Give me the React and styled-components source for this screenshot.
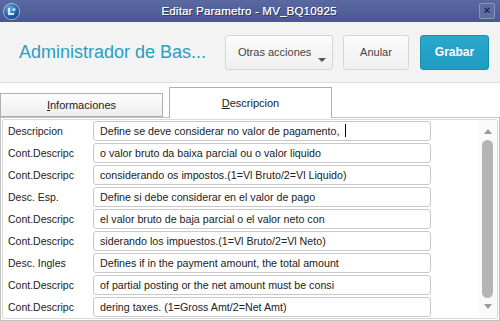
import React from "react";
import styled, { createGlobalStyle } from "styled-components";

const Global = createGlobalStyle`
  html, body { margin: 0; padding: 0; background: #fff; }
  body { font-family: "Liberation Sans", Arial, sans-serif; }
`;

const Window = styled.div`
  width: 500px;
  height: 321px;
  overflow: hidden;
  display: flex;
  flex-direction: column;
  background: #fff;
`;

const TitleBar = styled.div`
  height: 22px;
  flex: none;
  display: grid;
  grid-template-columns: 1fr auto 1fr;
  align-items: center;
  padding: 0 5px 0 3px;
  background: linear-gradient(#5a69a2, #4a588f);
`;

const TitleText = styled.div`
  color: #fff;
  font-size: 11.5px;
  letter-spacing: 0.2px;
  text-shadow: 1px 1px 0 #2a3160, 0.4px 0 0 #fff;
`;

const CloseBtn = styled.div`
  justify-self: end;
  width: 14px;
  height: 14px;
  border: 1px solid #8a94bf;
  border-radius: 2px;
  background: #5d6ca3;
  color: #1c2240;
  font-size: 11px;
  font-weight: bold;
  line-height: 13px;
  text-align: center;
`;

const Header = styled.div`
  height: 60px;
  flex: none;
  display: flex;
  align-items: center;
  padding: 0 11px 0 19px;
  background: #f3f3f3;
  border-bottom: 1px solid #dedede;
`;

const AppTitle = styled.div`
  flex: 1;
  color: #2a9ec0;
  font-size: 18px;
  margin-top: 1px;
`;

const Button = styled.div`
  position: relative;
  box-sizing: border-box;
  height: 35px;
  width: ${(p) => p.w}px;
  margin-left: ${(p) => p.ml || 0}px;
  display: flex;
  align-items: center;
  padding-left: ${(p) => (p.left ? 12 : 0)}px;
  justify-content: ${(p) => (p.left ? "flex-start" : "center")};
  border-radius: 3px;
  font-size: ${(p) => (p.primary ? "12px" : "11px")};
  font-weight: ${(p) => (p.primary ? "bold" : "normal")};
  color: ${(p) => (p.primary ? "#fff" : "#454545")};
  border: 1px solid ${(p) => (p.primary ? "#1b8fb0" : "#d6d6d6")};
  background: ${(p) =>
    p.primary
      ? "linear-gradient(#29a9cc, #1f9bbf)"
      : "linear-gradient(#fcfcfc, #efefef)"};
`;

const Caret = styled.span`
  position: absolute;
  right: 6px;
  bottom: 7px;
  width: 0;
  height: 0;
  border-left: 4px solid transparent;
  border-right: 4px solid transparent;
  border-top: 4px solid #555;
`;

const TabsRow = styled.div`
  height: 34px;
  flex: none;
  display: flex;
  align-items: flex-end;
  gap: 6px;
`;

const Tab = styled.div`
  box-sizing: border-box;
  width: 163px;
  height: ${(p) => (p.active ? 31 : 24)}px;
  margin-bottom: ${(p) => (p.active ? -1 : 0)}px;
  display: flex;
  align-items: center;
  justify-content: center;
  font-size: 11px;
  color: #222;
  border: 1px solid #b0b0b0;
  border-bottom: ${(p) => (p.active ? "none" : "1px solid #b0b0b0")};
  background: ${(p) => (p.active ? "#fff" : "linear-gradient(#fdfdfd, #eeeeee)")};
  position: relative;
  z-index: ${(p) => (p.active ? 2 : 0)};
  & u { text-decoration: underline; }
`;

const Panel = styled.div`
  flex: 1;
  display: flex;
  border: 1px solid #c2c2c2;
  padding: 1px;
  background: #fff;
`;

const Inner = styled.div`
  flex: 1;
  display: flex;
  border: 1px solid #dadada;
  border-radius: 2px;
`;

const Rows = styled.div`
  flex: 1;
  display: flex;
  flex-direction: column;
  gap: 3px;
  padding: 1px 0 0 5px;
`;

const Row = styled.div`
  display: flex;
  align-items: center;
  height: 19px;
`;

const Label = styled.div`
  width: 85px;
  font-size: 10.5px;
  color: #222;
`;

const Field = styled.div`
  box-sizing: border-box;
  width: 338px;
  height: 20px;
  border: 1px solid #c9c9c9;
  border-radius: 3px;
  padding-left: 6px;
  display: flex;
  align-items: center;
  font-size: 10.7px;
  color: #222;
  white-space: nowrap;
  overflow: hidden;
`;

const CaretBar = styled.span`
  display: inline-block;
  width: 1px;
  height: 13px;
  background: #000;
  margin-left: 6px;
`;

const Scrollbar = styled.div`
  width: 17px;
  margin: 1px 1px 1px 0;
  display: flex;
  flex-direction: column;
  align-items: center;
  background: #fafafa;
`;

const Arrow = styled.span`
  width: 0;
  height: 0;
  margin: ${(p) => (p.up ? "8px 0 6px" : "6px 0 8px")};
  border-left: 4px solid transparent;
  border-right: 4px solid transparent;
  ${(p) => (p.up ? "border-bottom: 5px solid #9a9a9a;" : "border-top: 5px solid #9a9a9a;")}
`;

const Thumb = styled.div`
  flex: 1;
  width: 11px;
  border-radius: 6px;
  background: #b4b4b4;
`;

const rows = [
  ["Descripcion", "Define se deve considerar no valor de pagamento,", true],
  ["Cont.Descripc", "o valor bruto da baixa parcial ou o valor liquido"],
  ["Cont.Descripc", "considerando os impostos.(1=Vl Bruto/2=Vl Liquido)"],
  ["Desc. Esp.", "Define si debe considerar en el valor de pago"],
  ["Cont.Descripc", "el valor bruto de baja parcial o el valor neto con"],
  ["Cont.Descripc", "siderando los impuestos.(1=Vl Bruto/2=Vl Neto)"],
  ["Desc. Ingles", "Defines if in the payment amount, the total amount"],
  ["Cont.Descripc", "of partial posting or the net amount must be consi"],
  ["Cont.Descripc", "dering taxes. (1=Gross Amt/2=Net Amt)"],
];

function Logo() {
  return (
    <svg width="17" height="17" viewBox="0 0 17 17">
      <defs>
        <radialGradient id="lg" cx="40%" cy="35%" r="65%">
          <stop offset="0" stopColor="#6fb3e8" />
          <stop offset="0.7" stopColor="#1f5fa8" />
          <stop offset="1" stopColor="#173f7a" />
        </radialGradient>
      </defs>
      <circle cx="8.5" cy="8.5" r="8" fill="url(#lg)" stroke="#c9d6ea" strokeWidth="0.8" />
      <path d="M5 5 L7 5 L7 10 L11 10 L11 12 L5 12 Z" fill="#eaf3ff" opacity="0.9" />
      <circle cx="11" cy="6.5" r="1.5" fill="#eaf3ff" opacity="0.8" />
    </svg>
  );
}

export default function App() {
  return (
    <Window>
      <Global />
      <TitleBar>
        <Logo />
        <TitleText>Editar Parametro - MV_BQ10925</TitleText>
        <CloseBtn>×</CloseBtn>
      </TitleBar>
      <Header>
        <AppTitle>Administrador de Bas...</AppTitle>
        <Button w={108} left>
          Otras acciones
          <Caret />
        </Button>
        <Button w={66} ml={10}>Anular</Button>
        <Button w={69} ml={11} primary>Grabar</Button>
      </Header>
      <TabsRow>
        <Tab>
          <span><u>I</u>nformaciones</span>
        </Tab>
        <Tab active>
          <span><u>D</u>escripcion</span>
        </Tab>
      </TabsRow>
      <Panel>
        <Inner>
          <Rows>
            {rows.map(([label, value, focus], i) => (
              <Row key={i}>
                <Label>{label}</Label>
                <Field>
                  {value}
                  {focus && <CaretBar />}
                </Field>
              </Row>
            ))}
          </Rows>
          <Scrollbar>
            <Arrow up />
            <Thumb />
            <Arrow />
          </Scrollbar>
        </Inner>
      </Panel>
    </Window>
  );
}
